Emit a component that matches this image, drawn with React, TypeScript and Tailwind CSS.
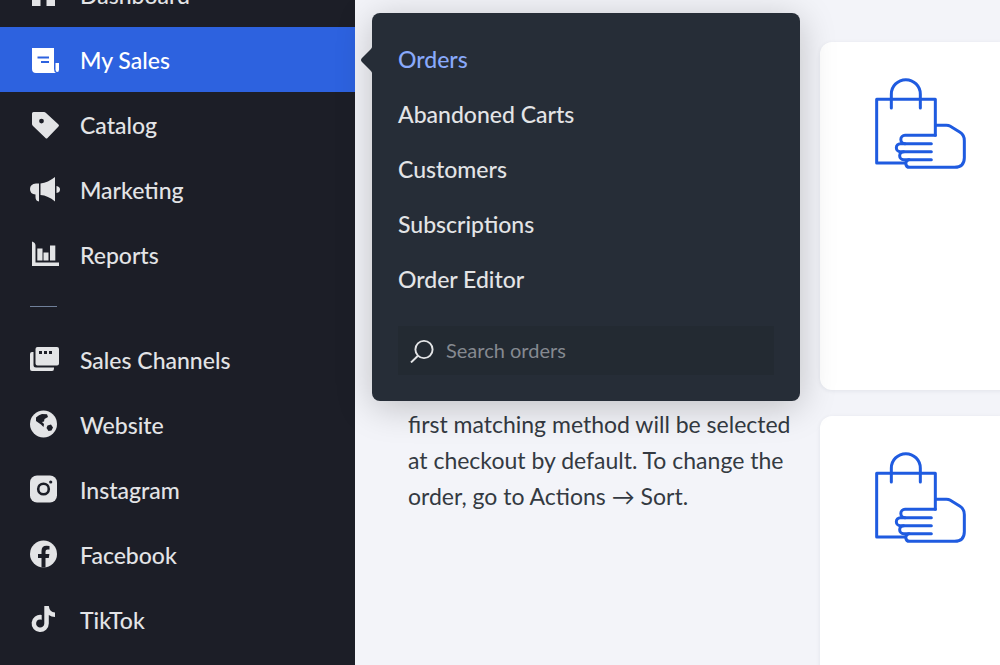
import type { ReactNode } from 'react'
import { clsx } from 'clsx'

interface NavItem {
  label: string
  icon: ReactNode
  active?: boolean
}

const storeItems: NavItem[] = [
  { label: 'Dashboard', icon: <DashboardIcon /> },
  { label: 'My Sales', icon: <SalesIcon />, active: true },
  { label: 'Catalog', icon: <TagIcon /> },
  { label: 'Marketing', icon: <MegaphoneIcon /> },
  { label: 'Reports', icon: <ReportsIcon /> },
]

const channelItems: NavItem[] = [
  { label: 'Sales Channels', icon: <ChannelsIcon /> },
  { label: 'Website', icon: <GlobeIcon /> },
  { label: 'Instagram', icon: <InstagramIcon /> },
  { label: 'Facebook', icon: <FacebookIcon /> },
  { label: 'TikTok', icon: <TikTokIcon /> },
]

const salesLinks = ['Orders', 'Abandoned Carts', 'Customers', 'Subscriptions', 'Order Editor']

export default function App() {
  return (
    <div className="flex h-screen overflow-hidden bg-[#f3f4f9] font-['Lato',sans-serif]">
      <Sidebar />
      <main className="flex min-w-0 flex-1 pt-[42px]">
        <section className="w-[465px] shrink-0 pl-[53px] pr-6 pt-[364px]">
          <p className="text-[23px] leading-[36px] text-[#343a42]">
            first matching method will be selected at checkout by default. To change the order, go to
            Actions → Sort.
          </p>
        </section>
        <div className="flex min-w-0 flex-1 flex-col gap-[26px]">
          <ShippingCard />
          <ShippingCard />
        </div>
      </main>
    </div>
  )
}

function Sidebar() {
  return (
    <aside className="relative z-10 w-[355px] shrink-0 bg-[#1c1e27]">
      <nav className="-mt-[38px]">
        <ul>
          {storeItems.map((item) => (
            <NavRow key={item.label} item={item} />
          ))}
        </ul>
        <hr className="mt-[19px] mb-5 ml-[30px] w-[27px] border-[#70809a]" />
        <ul>
          {channelItems.map((item) => (
            <NavRow key={item.label} item={item} />
          ))}
        </ul>
      </nav>
    </aside>
  )
}

function NavRow({ item }: { item: NavItem }) {
  return (
    <li className="relative">
      <a
        href="#"
        className={clsx(
          'flex h-[65px] items-center gap-5 pl-[30px] text-[23px] leading-[32px] font-medium',
          item.active ? 'bg-[#2d62df] text-white' : 'text-[#e3e4e6]'
        )}
      >
        {item.icon}
        {item.label}
      </a>
      {item.active && <SalesMenu />}
    </li>
  )
}

function SalesMenu() {
  return (
    <div className="absolute -top-[14px] left-full ml-[17px] w-[428px] rounded-lg bg-[#262d37] px-[26px] pt-[18px] pb-[26px] shadow-[0_6px_36px_rgba(0,0,0,0.22)]">
      <svg className="absolute top-[32px] -left-[12px] h-[30px] w-[13px]" viewBox="0 0 13 30" fill="#262d37">
        <path d="M13 0C12 2 12 3 10 5L2 13Q0 15 2 17L10 25C12 27 12 28 13 30Z" />
      </svg>
      <ul>
        {salesLinks.map((label, i) => (
          <li key={label}>
            <a
              href="#"
              className={clsx(
                'flex h-[55px] items-center text-[23px] leading-[32px] font-medium',
                i === 0 ? 'text-[#89a9fb]' : 'text-[#e3e4e6]'
              )}
            >
              {label}
            </a>
          </li>
        ))}
      </ul>
      <label className="mt-5 flex h-[49px] items-center gap-3 bg-[#232a32] pl-[12px]">
        <svg className="size-6 shrink-0" viewBox="0 0 24 24" fill="none" stroke="#e3e4e6" strokeWidth="1.9">
          <circle cx="14" cy="10.5" r="8.6" />
          <path d="M8 16.700L1 23.500" />
        </svg>
        <input
          type="search"
          aria-label="Search orders"
          placeholder="Search orders"
          className="min-w-0 flex-1 bg-transparent pb-px text-[20px] leading-[28px] outline-none placeholder:text-[#858990]"
        />
      </label>
    </div>
  )
}

function ShippingCard() {
  return (
    <article className="-mr-3 h-[348px] shrink-0 rounded-xl bg-white pt-[35px] pl-[53px] shadow-[0_1px_4px_rgba(30,40,70,0.08)]">
      <PickupIcon />
    </article>
  )
}

function PickupIcon() {
  return (
    <svg
      className="size-[94px]"
      viewBox="0 0 282 282"
      fill="none"
      stroke="#1f5be0"
      strokeWidth="9"
      strokeLinecap="round"
      strokeLinejoin="round"
    >
      <path d="M187 175V67H11V258H96" />
      <path d="M55 93V51.500a43.500 43.500 0 0 1 87 0V93" />
      <path d="M187 175H96a12.500 12.500 0 0 0 0 25" />
      <path d="M175 200H82a12 12 0 0 0 0 24H175" />
      <path d="M92 224a12 12 0 0 0 0 24H175" />
      <path d="M108 248C94 252 96 271 110 271H245Q274 270 274 242V191Q274 174 261 166L232 148Q227 145 220 145H190" />
    </svg>
  )
}

function DashboardIcon() {
  return (
    <svg className="size-[30px] shrink-0" viewBox="0 0 30 30" fill="currentColor">
      <path d="M2 2H10.500V26H2ZM16.500 13H25V26H16.500ZM16.500 2H25V10H16.500Z" />
    </svg>
  )
}

function SalesIcon() {
  return (
    <svg className="size-[30px] shrink-0" viewBox="0 0 30 30" fill="currentColor">
      <path d="M2 3H24V24Q24 27 26 28H6Q2 28 2 24Z" />
      <path d="M25.500 18H29V24.500Q29 27 27.300 27T25.500 24.500Z" />
      <path d="M7.500 12.500H19M11 17H19" stroke="#2d62df" strokeWidth="1.8" />
    </svg>
  )
}

function TagIcon() {
  return (
    <svg className="size-[30px] shrink-0" viewBox="0 0 30 30" fill="currentColor">
      <path
        fillRule="evenodd"
        d="M3.500 2H14Q15 2 16 3L28.500 14.500Q29.500 15.500 28.500 16.500L17.500 28Q16.500 29 15.500 28L3 16Q2 15 2 14V3.500Q2 2 3.500 2ZM11.500 8.700a2.400 2.400 0 1 0 0 4.800a2.400 2.400 0 0 0 0-4.800Z"
      />
    </svg>
  )
}

function MegaphoneIcon() {
  return (
    <svg className="size-[30px] shrink-0" viewBox="0 0 30 30" fill="currentColor">
      <path d="M9 8.500V26.500Q5.500 26 5.500 22V19.500Q0 19 0 14T6 8.500Z" />
      <path d="M10.500 8.500Q18 7.500 25 2V26.500Q18 20.500 10.500 20Z" />
      <path d="M26.500 11Q30 11.500 30 14.500T26.500 18Z" />
    </svg>
  )
}

function ReportsIcon() {
  return (
    <svg className="size-[30px] shrink-0" viewBox="0 0 30 30" fill="currentColor">
      <path d="M2 1.500Q5.500 2.500 5.500 5.500V22.500H29V26H2Z" />
      <path d="M7.300 8.500H12.500V20.500H7.300ZM13.500 12.500H18.500V20.500H13.500ZM20 5.500H25.300V20.500H20Z" />
    </svg>
  )
}

function ChannelsIcon() {
  return (
    <svg className="size-[30px] shrink-0" viewBox="0 0 30 30" fill="currentColor">
      <path d="M0 9Q0 7 2 7H3.500V20Q3.500 22.500 6 22.500H24V23.500Q24 26 22 26H2Q0 26 0 24Z" />
      <path
        fillRule="evenodd"
        d="M7.500 2H27Q29 2 29 4V18.500Q29 20.500 27 20.500H7.500Q5.500 20.500 5.500 18.500V4Q5.500 2 7.500 2ZM9 6V9H12V6ZM14 6V9H17V6ZM19 6V9H22V6Z"
      />
    </svg>
  )
}

function GlobeIcon() {
  return (
    <svg className="size-[30px] shrink-0" viewBox="0 0 30 30" fill="currentColor">
      <circle cx="13.500" cy="14" r="13.500" />
      <path
        fill="#1c1e27"
        d="M6 7.500Q9 4.500 12 4L17 4.200L18 7L14.500 9L14 11.500L12 12L14 14L13.500 17L11 14.500L6 11ZM17.500 15.500L21 14.500L23 17.500L21.500 20.500L18.500 21L16.500 18Z"
      />
    </svg>
  )
}

function InstagramIcon() {
  return (
    <svg className="size-[30px] shrink-0" viewBox="0 0 30 30" fill="currentColor">
      <rect y="0.500" width="27" height="27" rx="7" />
      <circle cx="13.500" cy="14" r="5.300" fill="none" stroke="#1c1e27" strokeWidth="2.600" />
      <circle cx="20.700" cy="7" r="1.600" fill="#1c1e27" />
    </svg>
  )
}

function FacebookIcon() {
  return (
    <svg className="size-[30px] shrink-0" viewBox="0 0 30 30" fill="currentColor">
      <circle cx="13.500" cy="14" r="13.500" />
      <path
        fill="#1c1e27"
        d="M11.500 27.500V18H8V14H11.500V11Q11.500 5.800 16.500 5.800L19.500 6V9.500H17.500Q15.500 9.500 15.500 11.500V14H19.400L18.800 18H15.500V27.500Z"
      />
    </svg>
  )
}

function TikTokIcon() {
  return (
    <svg className="size-[30px] shrink-0" viewBox="0 0 30 30" fill="currentColor">
      <path d="M14.300 1H18.800Q19.500 7 25 7.500V12Q21.500 12 18.800 10V18.500A8.600 8.600 0 1 1 11.700 10V14.700A4.100 4.100 0 1 0 14.300 18.500Z" />
    </svg>
  )
}
